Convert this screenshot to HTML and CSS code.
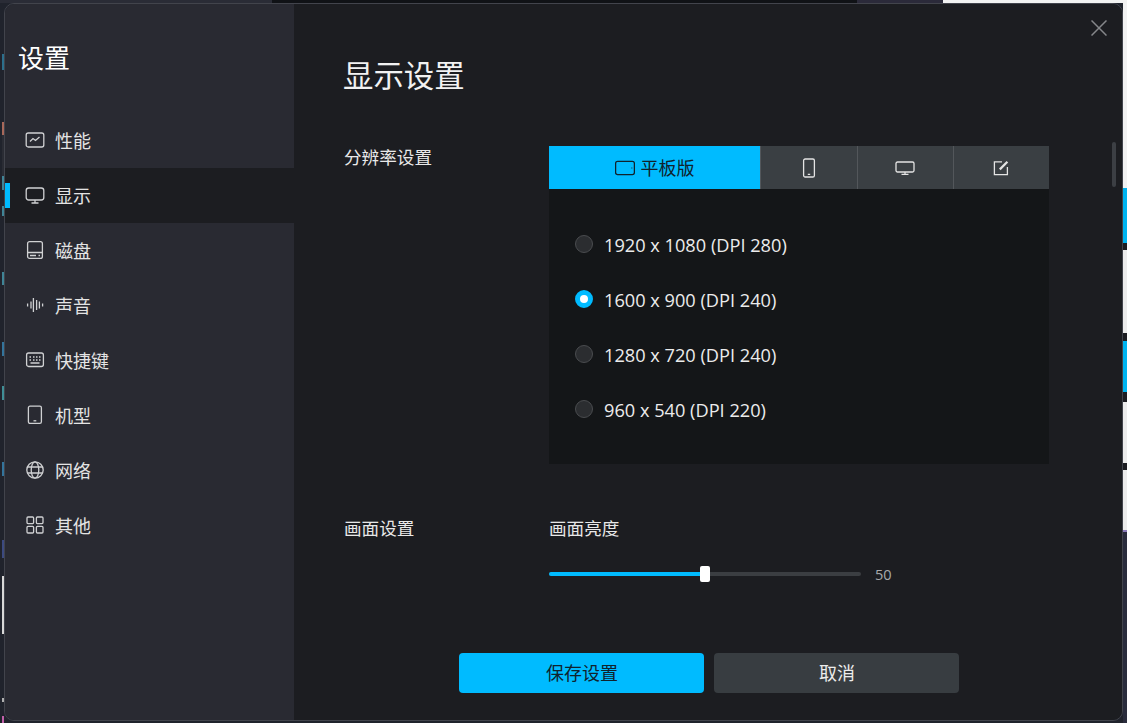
FILE: index.html
```html
<!DOCTYPE html>
<html lang="zh-CN">
<head>
  <meta charset="UTF-8">
  <title>设置</title>
  <link rel="stylesheet" href="styles.css">
</head>
<body>

<div class="dialog">
  <aside class="sidebar">
    <h2 class="sidebar-title">设置</h2>
    <nav class="nav">
      <a class="nav-item">
        <svg class="icon" viewBox="0 0 20 20"><rect x="1.2" y="3" width="17.6" height="14" rx="2"/><path d="M5 11.5l3-3 2.5 2 4-3.5"/></svg>
        性能
      </a>
      <a class="nav-item active">
        <svg class="icon" viewBox="0 0 20 20"><rect x="1.2" y="3" width="17.6" height="12" rx="2.5"/><path d="M10 15v3M6.5 18h7"/></svg>
        显示
      </a>
      <a class="nav-item">
        <svg class="icon" viewBox="0 0 20 20"><rect x="2.6" y="1.6" width="14.8" height="16.8" rx="2"/><path d="M2.6 12.5h14.8M5 15.5h6M13.5 15.5h1.5"/></svg>
        磁盘
      </a>
      <a class="nav-item">
        <svg class="icon" viewBox="0 0 20 20"><path d="M2.6 8.5v3M6 6.5v7M8.4 3v14M11.6 5v10M14.4 6.5v7M17.6 8.5v3"/></svg>
        声音
      </a>
      <a class="nav-item">
        <svg class="icon" viewBox="0 0 20 20"><rect x="1.6" y="3" width="16.8" height="13.5" rx="2"/><path d="M4.5 7h1.5M8 7h1.5M11 7h1.5M14 7h1.5M4.5 10h1.5M8 10h1.5M11 10h1.5M14 10h1.5M5.5 13h9"/></svg>
        快捷键
      </a>
      <a class="nav-item">
        <svg class="icon" viewBox="0 0 20 20"><rect x="3.4" y="1.2" width="13" height="17.2" rx="1.6"/><path d="M8.5 15.8h2.8"/></svg>
        机型
      </a>
      <a class="nav-item">
        <svg class="icon" viewBox="0 0 20 20"><circle cx="10" cy="10" r="8.2"/><ellipse cx="10" cy="10" rx="3.8" ry="8.2"/><path d="M2.4 7h15.2M2.4 13h15.2"/></svg>
        网络
      </a>
      <a class="nav-item">
        <svg class="icon" viewBox="0 0 20 20"><rect x="2" y="2" width="6.6" height="6.6" rx="1"/><rect x="11.4" y="2" width="6.6" height="6.6" rx="1"/><rect x="2" y="11.4" width="6.6" height="6.6" rx="1"/><rect x="11.4" y="11.4" width="6.6" height="6.6" rx="1"/></svg>
        其他
      </a>
    </nav>
  </aside>

  <main class="main">
    <svg class="close" viewBox="0 0 16 16"><path d="M0.5 0.5l15 15M15.5 0.5l-15 15"/></svg>
    <div class="scrollbar"></div>

    <h1 class="main-title">显示设置</h1>

    <section class="row">
      <div class="row-label">分辨率设置</div>
      <div class="row-body">
        <div class="tabs">
          <div class="tab tab-first active">
            <svg class="icon" viewBox="0 0 20 20"><rect x="0.6" y="3.4" width="18.8" height="13.2" rx="2"/><path d="M16.6 10h.6"/></svg>
            <span class="tab-text">平板版</span>
          </div>
          <div class="tab tab-second">
            <svg class="icon" viewBox="0 0 20 20"><rect x="4.6" y="1" width="10.8" height="18" rx="1.6"/><path d="M8.8 16.4h2.4"/></svg>
          </div>
          <div class="tab">
            <svg class="icon" viewBox="0 0 20 20"><rect x="1" y="4" width="18" height="10" rx="1.5"/><path d="M10 14v2.4M6.5 16.4h7"/></svg>
          </div>
          <div class="tab">
            <svg class="icon" viewBox="0 0 20 20"><path d="M11 3.8H3.4v12.8h13V9"/><path class="pen" d="M8.8 11.4l7.6-7.6"/></svg>
          </div>
        </div>
        <div class="panel">
          <label class="radio-row"><span class="radio"></span>1920 x 1080 (DPI 280)</label>
          <label class="radio-row"><span class="radio checked"></span>1600 x 900 (DPI 240)</label>
          <label class="radio-row"><span class="radio"></span>1280 x 720 (DPI 240)</label>
          <label class="radio-row"><span class="radio"></span>960 x 540 (DPI 220)</label>
        </div>
      </div>
    </section>

    <section class="row row-picture">
      <div class="row-label">画面设置</div>
      <div class="row-body">
        <div class="row-label">画面亮度</div>
        <div class="slider">
          <div class="track">
            <div class="fill"></div>
            <div class="thumb"></div>
          </div>
          <span class="value">50</span>
        </div>
      </div>
    </section>

    <div class="footer">
      <button class="btn btn-primary">保存设置</button>
      <button class="btn">取消</button>
    </div>
  </main>
</div>

</body>
</html>
```

FILE: styles.css
```css
* {
  box-sizing: border-box;
}
html, body {
  height: 100%;
}
body {
  margin: 0;
  padding: 3px 4px 2px 4px;
  height: 723px;
  overflow: hidden;
  font-family: "Open Sans", "Noto Sans CJK SC", sans-serif;
  color: #e8e8e8;
  /* what shows of the windows behind the dialog */
  background:
    linear-gradient(to bottom,
      #f2f2f2 0 188px, #00b4f0 188px 243px, #1c1d22 243px 250px,
      #ececec 250px 333px, #1c1d22 333px 341px, #00b4f0 341px 392px,
      #1c1d22 392px 402px, #ececec 402px 463px, #1c1d22 463px 470px,
      #ececec 470px 530px, #8a7ab8 530px 532px, #2a2c3c 532px) right top / 4px 100% no-repeat,
    linear-gradient(to right,
      #2a2c36 0 272px, #101216 272px 857px, #2b2a3a 857px 943px, #f2f2f2 943px) left top / 100% 3px no-repeat,
    linear-gradient(to bottom,
      #20232c 0 54px, #2c6f8c 54px 70px, #20232c 70px 122px, #a8685a 122px 135px,
      #2a2c34 135px 176px, #3f8496 176px 190px, #20232c 190px 206px, #3f8496 206px 216px,
      #20232c 216px 272px, #3f8496 272px 285px, #20232c 285px 342px, #33749c 342px 356px,
      #20232c 356px 386px, #3f8e96 386px 400px, #20232c 400px 462px, #33749c 462px 476px,
      #20232c 476px 540px, #3c4a80 540px 558px, #20232c 558px 576px, #d8d8d8 576px 634px,
      #20232c 634px 698px, #b0b0b0 698px 702px, #20232c 702px 716px, #c060a8 716px) 2px top / 2px 100% no-repeat,
    #20232c;
}

.dialog {
  display: flex;
  width: 1119px;
  height: 718px;
  border: 1px solid #42444c;
  border-radius: 10px;
  overflow: hidden;
}

/* sidebar */
.sidebar {
  flex: 0 0 289px;
  background: #292a32;
}
.sidebar-title {
  margin: 0;
  padding: 35px 0 0 13px;
  height: 109px;
  font-size: 26px;
  font-weight: 400;
  line-height: 38px;
  color: #fff;
}
.nav-item {
  position: relative;
  display: flex;
  align-items: center;
  gap: 10px;
  height: 55px;
  padding: 0 0 2px 20px;
  font-size: 18px;
  color: #e4e4e4;
}
.nav-item.active {
  background: #1c1d21;
}
.nav-item.active::before {
  content: "";
  position: absolute;
  left: 0;
  top: 15px;
  width: 5px;
  height: 25px;
  background: #00bbff;
}
.icon {
  flex: none;
  width: 20px;
  height: 20px;
  fill: none;
  stroke: #d0d1d3;
  stroke-width: 1.3;
}

/* main area */
.main {
  position: relative;
  flex: 1;
  padding: 51px 0 0 50px;
  background: #1c1d21;
}
.close {
  position: absolute;
  left: 797px;
  top: 16px;
  width: 16px;
  height: 16px;
  fill: none;
  stroke: #85878a;
  stroke-width: 1.5;
}
.scrollbar {
  position: absolute;
  left: 818px;
  top: 138px;
  width: 4px;
  height: 45px;
  border-radius: 2px;
  background: #3c3f44;
}
.main-title {
  margin: 1px 0 50px -1px;
  font-size: 30.4px;
  font-weight: 400;
  line-height: 40px;
  color: #f2f2f2;
}
.row {
  display: grid;
  grid-template-columns: 205px 500px;
}
.row-picture {
  margin-top: 53px;
}
.row-label {
  font-size: 17.6px;
  line-height: 22px;
  color: #e8e8e8;
}

/* tabs */
.tabs {
  display: flex;
  height: 43px;
}
.tab {
  display: flex;
  align-items: center;
  justify-content: center;
  gap: 6px;
  flex: 0 0 96px;
  padding-right: 1px;
  background: #3a3f43;
  border-left: 1px solid #53575b;
  font-size: 18px;
}
.tab-first {
  flex: 0 0 211px;
  padding-right: 0;
  border-left: 0;
}
.tab-second {
  flex: 0 0 97px;
}
.tab-text {
  margin-top: -2px;
}
.tab .icon {
  stroke: #e4e4e4;
}
.tab .icon .pen {
  stroke-width: 2.2;
}
.tab.active {
  background: #00bbff;
  color: #10222c;
}
.tab.active .icon {
  stroke: #10222c;
}
.panel {
  height: 275px;
  padding: 28px 0 27px 26px;
  background: #141618;
}
.radio-row {
  display: flex;
  align-items: center;
  gap: 11px;
  height: 55px;
  font-size: 18.2px;
  color: #ececec;
}
.radio {
  width: 18px;
  height: 18px;
  margin-top: -2px;
  border: 1px solid #4a4c4f;
  border-radius: 50%;
  background: #2b2d30;
}
.radio.checked {
  border: 5px solid #00bbff;
  background: #fff;
}

/* slider */
.slider {
  display: flex;
  align-items: center;
  gap: 14px;
  height: 16px;
  margin-top: 27px;
}
.track {
  position: relative;
  width: 312px;
  height: 4px;
  border-radius: 2px;
  background: #3b3e42;
}
.fill {
  width: 50%;
  height: 100%;
  border-radius: 2px;
  background: #00bbff;
}
.thumb {
  position: absolute;
  left: 151px;
  top: -6px;
  width: 10px;
  height: 16px;
  border-radius: 2px;
  background: #fff;
}
.value {
  font-size: 14.6px;
  color: #a8aaac;
}

/* footer buttons */
.footer {
  display: flex;
  justify-content: center;
  gap: 10px;
  width: 829px;
  margin: 71px 0 0 -50px;
}
.btn {
  width: 245px;
  height: 40px;
  padding: 0 0 3px 2px;
  border: 0;
  border-radius: 4px;
  background: #383d41;
  color: #ececec;
  font-family: inherit;
  font-size: 18px;
}
.btn-primary {
  background: #00bbff;
  color: #10222c;
}
```
